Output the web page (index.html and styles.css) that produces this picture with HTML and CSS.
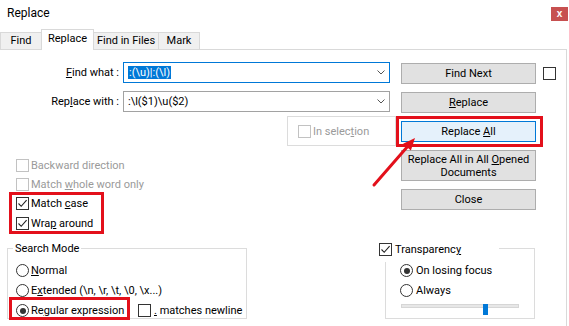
FILE: index.html
```html
<!DOCTYPE html>
<html>
<head>
<meta charset="utf-8">
<title>Replace</title>
<link rel="stylesheet" href="styles.css">
</head>
<body>
<div class="win">
  <div class="titlebar">
    <span class="title">Replace</span>
    <span class="close">x</span>
  </div>
  <div class="tabs">
    <div class="tab t-find">Find</div>
    <div class="tab t-rep active">Replace</div>
    <div class="tab t-fif">Find in Files</div>
    <div class="tab t-mark">Mark</div>
  </div>
  <div class="panel">
    <div class="row">
      <label class="lbl"><u>F</u>ind what :</label>
      <div class="combo focus">
        <span class="txt"><span class="sel">:(\u)|:(\l)</span></span>
        <svg class="chev" width="8" height="5" viewBox="0 0 8 5"><path d="M0.5 0.5 L4 4 L7.5 0.5" fill="none" stroke="#555" stroke-width="1"/></svg>
      </div>
      <button class="btn">Find Next</button>
      <span class="cb side"></span>
    </div>
    <div class="row">
      <label class="lbl">Rep<u>l</u>ace with :</label>
      <div class="combo">
        <span class="txt">:\l($1)\u($2)</span>
        <svg class="chev" width="8" height="5" viewBox="0 0 8 5"><path d="M0.5 0.5 L4 4 L7.5 0.5" fill="none" stroke="#555" stroke-width="1"/></svg>
      </div>
      <button class="btn"><u>R</u>eplace</button>
    </div>
    <div class="mid">
      <div class="leftcol">
        <div class="insel">
          <span class="cb dis"></span>
          <span class="ctext dis-t">In selec<u>t</u>ion</span>
        </div>
        <div class="checks">
          <div class="chk"><span class="cb dis"></span><span class="ctext dis-t">Backward direction</span></div>
          <div class="chk"><span class="cb dis"></span><span class="ctext dis-t">Match <u>w</u>hole word only</span></div>
          <div class="chk"><span class="cb"><svg width="11" height="11" viewBox="0 0 11 11"><path d="M1.5 5.5 L4.2 8.3 L9.6 2.2" fill="none" stroke="#222" stroke-width="1.1"/></svg></span><span class="ctext">Match <u>c</u>ase</span></div>
          <div class="chk"><span class="cb"><svg width="11" height="11" viewBox="0 0 11 11"><path d="M1.5 5.5 L4.2 8.3 L9.6 2.2" fill="none" stroke="#222" stroke-width="1.1"/></svg></span><span class="ctext">Wra<u>p</u> around</span></div>
        </div>
      </div>
      <div class="rightcol">
        <button class="btn primary">Replace <u>A</u>ll</button>
        <button class="btn tall">Replace All in All <u>O</u>pened<br>Documents</button>
        <button class="btn">Close</button>
      </div>
    </div>
    <div class="bottom">
      <div class="group sm">
        <div class="legend">Search Mode</div>
        <div class="rrow first"><span class="radio"></span><span class="rtext"><u>N</u>ormal</span></div>
        <div class="rrow"><span class="radio"></span><span class="rtext">E<u>x</u>tended (\n, \r, \t, \0, \x...)</span></div>
        <div class="rrow">
          <div class="ritem"><span class="radio on"></span><span class="rtext">Re<u>g</u>ular expression</span></div>
          <span class="cb nl"></span><span class="rtext"><u>.</u> matches newline</span>
        </div>
      </div>
      <div class="group tr">
        <div class="legend2"><span class="cb"><svg width="11" height="11" viewBox="0 0 11 11"><path d="M1.5 5.5 L4.2 8.3 L9.6 2.2" fill="none" stroke="#222" stroke-width="1.1"/></svg></span><span class="ctext tt">Transparenc<u>y</u></span></div>
        <div class="rrow first"><span class="radio on"></span><span class="rtext gap3">On losing focus</span></div>
        <div class="rrow"><span class="radio"></span><span class="rtext gap3">Always</span></div>
        <div class="slider"><div class="track"></div><div class="thumb"></div></div>
      </div>
    </div>
  </div>

  <div class="mark m1"></div>
  <div class="mark m2"></div>
  <div class="mark m3"></div>
  <svg class="arrow" width="70" height="65" viewBox="0 0 70 65">
    <line x1="14" y1="55" x2="48" y2="16" stroke="#e3101b" stroke-width="3" stroke-linecap="round"/>
    <polygon points="55,8 50.9,20.6 43.1,13.8" fill="#e3101b"/>
  </svg>
</div>
</body>
</html>
```
FILE: styles.css
```css
* { box-sizing: border-box; }
html, body { margin: 0; padding: 0; background: #fff; }
body { font-family: Roboto, "Liberation Sans", sans-serif; font-size: 11px; color: #000; }
u { text-decoration: underline; text-underline-offset: 1px; }

.win { position: relative; width: 569px; height: 326px; overflow: hidden; background: #fff; }

.titlebar { display: flex; align-items: flex-start; height: 29px; }
.title { font-size: 12px; line-height: 16px; margin: 5px 0 0 7px; }
.close { margin: 7px 1px 0 auto; width: 17px; height: 14px; background: #c75050; color: #fff;
  font: bold 10px/13px "Liberation Sans", sans-serif; text-align: center; }

.tabs { display: flex; align-items: flex-end; height: 20px; }
.tab { height: 17px; border: 1px solid #d9d9d9; border-bottom: 0; background: #f0f0f0;
  text-align: center; line-height: 15px; margin-left: -1px; }
.tab:first-child { margin-left: 0; }
.tab.active { height: 21px; margin-bottom: -1px; background: #fff; padding-top: 1px; position: relative; z-index: 1; }
.t-find { width: 42px; }
.t-rep { width: 53px; }
.t-fif { width: 66px; }
.t-mark { width: 42px; }

.panel { width: 567px; height: 277px; border-top: 1px solid #d9d9d9; border-right: 1px solid #d9d9d9; padding-top: 12px; }

.row { display: flex; align-items: flex-start; height: 22px; }
.row + .row { margin-top: 7px; }
.lbl { width: 119px; text-align: right; line-height: 21px; }
.combo { margin-left: 4px; width: 267px; height: 21px; border: 1px solid #a2a2a2; display: flex; align-items: center; padding: 0 4px 0 4px; }
.combo.focus { border-color: #0078d7; }
.combo .txt { flex: 1; line-height: 13px; }
.sel { background: #0078d7; color: #fff; padding: 0 1px; display: inline-block; line-height: 13px; }
.chev { display: block; }

.btn { font: inherit; color: #000; padding: 0; margin: 1px 0 0 11px; width: 135px; height: 21px;
  border: 1px solid #adadad; background: #e1e1e1; line-height: 13px; }
.btn.primary { background: #e5f1fb; border-color: #0078d7; }
.btn.tall { height: 31px; }

.cb { width: 13px; height: 13px; border: 1px solid #333; background: #fff; flex: none; display: block; }
.cb svg { display: block; }
.cb.dis { border-color: #c2c2c2; }
.cb.side { margin: 5px 0 0 7px; }
.ctext { line-height: 13px; margin-left: 2px; }
.dis-t { color: #9a9a9a; }

.mid { display: flex; margin-top: 3px; }
.leftcol { width: 396px; }
.insel { margin-left: 287px; width: 109px; height: 30px; border: 1px solid #dcdcdc; display: flex; align-items: flex-start; padding: 8px 0 0 10px; }
.checks { margin-top: 13px; padding-left: 16px; }
.chk { display: flex; align-items: flex-start; height: 19px; }
.chk:last-child { margin-top: 1px; }

.rightcol { margin-left: 5px; width: 135px; display: flex; flex-direction: column; padding-top: 5px; gap: 8px; }
.rightcol .btn { margin: 0; }

.bottom { display: flex; margin-top: 12px; }
.group { border: 1px solid #dcdcdc; height: 71px; }
.sm { margin-left: 7px; width: 240px; padding-left: 8px; }
.legend { display: block; width: max-content; margin: -8px 0 0 -3px; background: #fff; line-height: 16px; padding: 0 2px; }
.rrow { display: flex; align-items: flex-start; height: 20px; }
.sm .rrow.first { margin-top: 3px; }
.radio { width: 13px; height: 13px; border: 1px solid #333; border-radius: 50%; background: #fff; margin-top: 4px; flex: none; position: relative; }
.radio.on::after { content: ""; position: absolute; left: 2.5px; top: 2.5px; width: 6px; height: 6px; border-radius: 50%; background: #333; }
.rtext { line-height: 21px; margin-left: 2px; }
.rtext.gap3 { margin-left: 3px; }
.ritem { display: flex; align-items: flex-start; width: 122px; }
.cb.nl { margin-top: 4px; }
.cb.nl + .rtext { margin-left: 3px; }

.tr { margin-left: 138px; width: 150px; padding-left: 14px; }
.legend2 { margin: -7px 0 0 -21px; width: 120px; height: 20px; padding-top: 1px; background: #fff; display: flex; align-items: flex-start; }
.legend2 .tt { margin-left: 3px; }
.tr .rrow.first { margin-top: -2px; }
.slider { position: relative; margin-left: 1px; width: 118px; height: 11px; }
.track { margin-top: 4px; height: 4px; background: #e7e7e7; border: 1px solid #d6d6d6; }
.thumb { position: absolute; left: 82px; top: 0; width: 5px; height: 11px; background: #0078d7; }

.mark { position: absolute; border: 3px solid #e3101b; }
.m1 { left: 396px; top: 116px; width: 147px; height: 31px; }
.m2 { left: 9px; top: 192px; width: 95px; height: 42px; }
.m3 { left: 9px; top: 297px; width: 121px; height: 23px; }
.arrow { position: absolute; left: 360px; top: 130px; }
```
